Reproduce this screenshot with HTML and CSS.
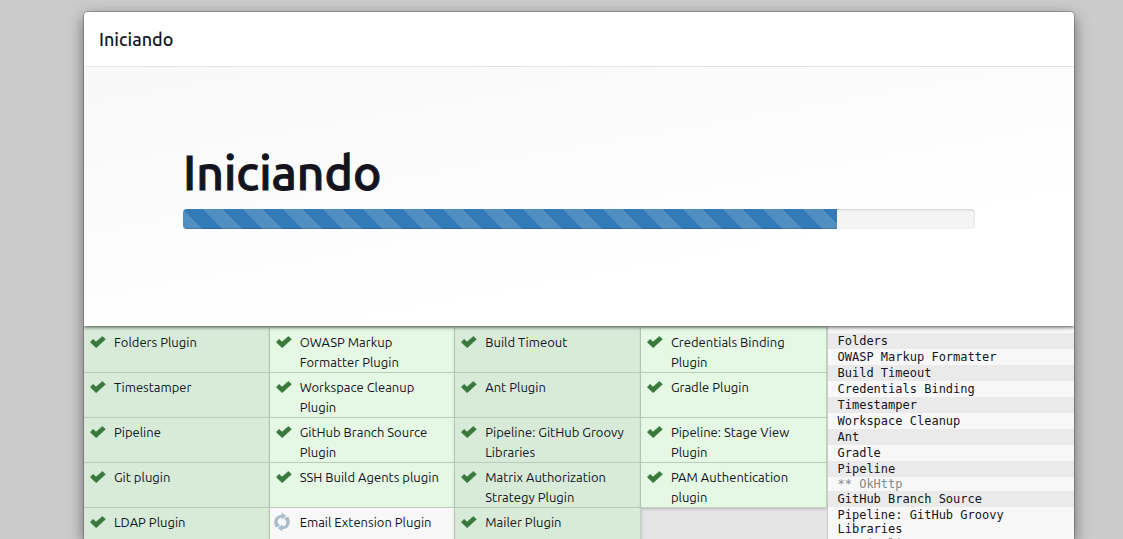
FILE: index.html
```html
<!DOCTYPE html>
<html lang="es">
<head>
<meta charset="utf-8">
<title>Iniciando</title>
<link rel="stylesheet" href="styles.css">
</head>
<body>
<svg class="sprite" aria-hidden="true">
  <symbol id="check" viewBox="0 0 16 12"><path d="M0.4 6.2 3.1 3.3 6 6 12.4 0.4 15.4 3.3 6.2 11.7z" stroke="#39793c" stroke-width="0.6" stroke-linejoin="round"/></symbol>
  <symbol id="sync" viewBox="0 0 16 20"><path d="M7.6 0.4 12.2 4 7.6 7.6V5.4C3.8 6 2.6 9.4 4.6 12.2L6.2 13.4 1.8 15.4C-1.4 10.4 0.4 3.6 7.6 2.8z"/><path d="M8.4 19.6 3.8 16 8.4 12.4V14.6C12.2 14 13.4 10.6 11.4 7.8L9.8 6.6 14.2 4.6C17.4 9.6 15.6 16.4 8.4 17.2z"/></symbol>
</svg>
<main class="dialog">
  <header class="dialog-header"><h4 class="dialog-title">Iniciando</h4></header>
  <section class="hero">
    <h1 class="hero-title">Iniciando</h1>
    <div class="progress" role="progressbar" aria-label="Iniciando" aria-valuemin="0" aria-valuemax="100" aria-valuenow="83"><div class="progress-bar" style="width: 82.6%"></div></div>
  </section>
  <section class="install">
    <ul class="plugins">
      <li class="plugin"><svg class="icon"><use href="#check"/></svg>Folders Plugin</li>
      <li class="plugin"><svg class="icon"><use href="#check"/></svg>OWASP Markup Formatter Plugin</li>
      <li class="plugin"><svg class="icon"><use href="#check"/></svg>Build Timeout</li>
      <li class="plugin"><svg class="icon"><use href="#check"/></svg>Credentials Binding Plugin</li>
      <li class="plugin"><svg class="icon"><use href="#check"/></svg>Timestamper</li>
      <li class="plugin"><svg class="icon"><use href="#check"/></svg>Workspace Cleanup Plugin</li>
      <li class="plugin"><svg class="icon"><use href="#check"/></svg>Ant Plugin</li>
      <li class="plugin"><svg class="icon"><use href="#check"/></svg>Gradle Plugin</li>
      <li class="plugin"><svg class="icon"><use href="#check"/></svg>Pipeline</li>
      <li class="plugin"><svg class="icon"><use href="#check"/></svg>GitHub Branch Source Plugin</li>
      <li class="plugin"><svg class="icon"><use href="#check"/></svg>Pipeline: GitHub Groovy Libraries</li>
      <li class="plugin"><svg class="icon"><use href="#check"/></svg>Pipeline: Stage View Plugin</li>
      <li class="plugin"><svg class="icon"><use href="#check"/></svg>Git plugin</li>
      <li class="plugin"><svg class="icon"><use href="#check"/></svg>SSH Build Agents plugin</li>
      <li class="plugin"><svg class="icon"><use href="#check"/></svg>Matrix Authorization Strategy Plugin</li>
      <li class="plugin"><svg class="icon"><use href="#check"/></svg>PAM Authentication plugin</li>
      <li class="plugin"><svg class="icon"><use href="#check"/></svg>LDAP Plugin</li>
      <li class="plugin pending"><svg class="icon"><use href="#sync"/></svg>Email Extension Plugin</li>
      <li class="plugin"><svg class="icon"><use href="#check"/></svg>Mailer Plugin</li>
    </ul>
    <div class="console">
      <div class="line">Folders</div>
      <div class="line">OWASP Markup Formatter</div>
      <div class="line">Build Timeout</div>
      <div class="line">Credentials Binding</div>
      <div class="line">Timestamper</div>
      <div class="line">Workspace Cleanup</div>
      <div class="line">Ant</div>
      <div class="line">Gradle</div>
      <div class="line">Pipeline</div>
      <div class="line dependency">** OkHttp</div>
      <div class="line">GitHub Branch Source</div>
      <div class="line">Pipeline: GitHub Groovy Libraries</div>
      <div class="line dependency">** Pipeline</div>
    </div>
  </section>
</main>
</body>
</html>
```
FILE: styles.css
```css
* { box-sizing: border-box; }

body {
  margin: 0;
  height: 100vh;
  overflow: hidden;
  padding: 12px 49px 0 84px;
  background: #cbcbcb;
  color: #14141f;
  font-family: Ubuntu, "Noto Sans", sans-serif;
  font-size: 13px;
  line-height: 20px;
}

.sprite { display: none; }

.dialog {
  display: flex;
  flex-direction: column;
  height: 100%;
  border-radius: 4px 4px 0 0;
  background: #fff;
  box-shadow: 0 0 0 1px rgba(0, 0, 0, 0.2), 0 5px 15px rgba(0, 0, 0, 0.5);
}

.dialog-header {
  padding: 15px;
  border-bottom: 1px solid #e5e5e5;
}

.dialog-title {
  margin: 0;
  font-size: 18px;
  font-weight: 500;
  line-height: 24px;
}

.hero {
  position: relative;
  padding: 79px 10% 97px;
  background: linear-gradient(170deg, #f8f8f8, #fff 70%);
  box-shadow: 0 1px 4px rgba(0, 0, 0, 0.7);
  clip-path: inset(0 0 -6px 0);
}

.hero-title {
  margin: 0 0 10px;
  font-size: 48px;
  font-weight: 500;
  line-height: 53px;
  -webkit-text-stroke: 1px currentColor;
}

.progress {
  height: 20px;
  overflow: hidden;
  border-radius: 4px;
  background: #f4f4f4;
  box-shadow: inset 0 1px 2px rgba(0, 0, 0, 0.15);
}

.progress-bar {
  height: 100%;
  background: linear-gradient(45deg, rgba(255, 255, 255, 0.15) 25%, transparent 25%, transparent 50%, rgba(255, 255, 255, 0.15) 50%, rgba(255, 255, 255, 0.15) 75%, transparent 75%) 20px 0 / 40px 40px #337ab7;
  box-shadow: inset 0 -1px 0 rgba(0, 0, 0, 0.15);
}

.install {
  display: grid;
  grid-template-columns: 3fr 1fr;
  flex: 1;
  min-height: 0;
  overflow: hidden;
  background: #e4e4e4;
}

.plugins {
  display: grid;
  grid-template-columns: repeat(4, 1fr);
  grid-auto-rows: 45px;
  margin: 0;
  padding: 2px 0 0;
  background: linear-gradient(#d8ebd9, #d8ebd9) 0 0 / 100% 2px no-repeat;
  list-style: none;
}

.plugin {
  display: flex;
  gap: 8px;
  padding: 4px 9px 0 6px;
  border-right: 1px solid #c0d3c0;
  border-bottom: 1px solid #c0d3c0;
  background: #e4f8e4;
  box-shadow: 0 1px 3px rgba(0, 0, 0, 0.2);
}

.plugin:nth-child(odd) { background: #d8ebd9; }
.plugin.pending { background: #f8f8f8; }

.icon {
  flex: none;
  width: 16px;
  height: 12px;
  margin-top: 4px;
  overflow: visible;
  fill: #39793c;
}

.pending .icon {
  height: 20px;
  margin: 0 2px 0 -2px;
  fill: #a9bccb;
}

.console {
  padding-top: 7px;
  border-left: 1px solid #c8c8c8;
  background: #f8f8f8;
  font-family: "DejaVu Sans Mono", monospace;
  font-size: 12px;
  line-height: 14px;
}

.line { padding: 1px 10px; }
.line:nth-child(odd) { background: #eaeaea; }

.line.dependency {
  padding-block: 0;
  background: none;
  color: #888;
}
```
